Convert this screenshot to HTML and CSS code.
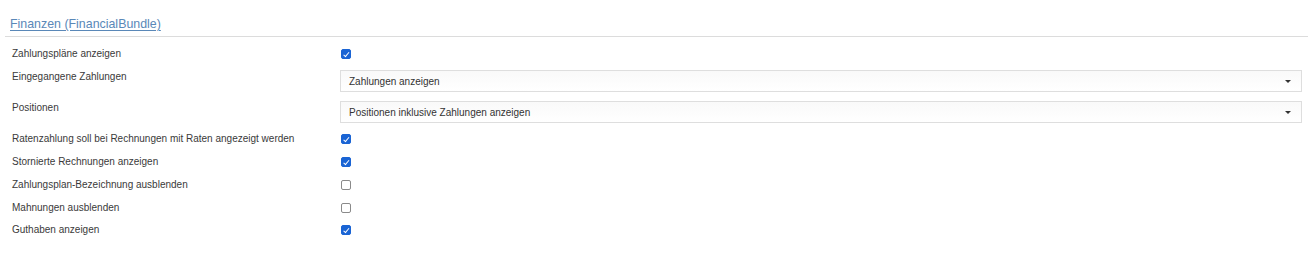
FILE: index.html
```html
<!DOCTYPE html>
<html lang="de">
<head>
<meta charset="utf-8">
<title>Finanzen</title>
<link rel="stylesheet" href="styles.css">
</head>
<body>
<div class="panel">
  <div class="panel-head">
    <a class="panel-title" href="#">Finanzen (FinancialBundle)</a>
  </div>
  <div class="form">
    <div class="row row-first">
      <div class="label">Zahlungspläne anzeigen</div>
      <div class="control"><span class="cb checked"></span></div>
    </div>
    <div class="row row-select">
      <div class="label">Eingegangene Zahlungen</div>
      <div class="control"><div class="select"><span class="select-text">Zahlungen anzeigen</span><span class="caret"></span></div></div>
    </div>
    <div class="row row-select row-select-last">
      <div class="label">Positionen</div>
      <div class="control"><div class="select"><span class="select-text">Positionen inklusive Zahlungen anzeigen</span><span class="caret"></span></div></div>
    </div>
    <div class="row">
      <div class="label">Ratenzahlung soll bei Rechnungen mit Raten angezeigt werden</div>
      <div class="control"><span class="cb checked"></span></div>
    </div>
    <div class="row">
      <div class="label">Stornierte Rechnungen anzeigen</div>
      <div class="control"><span class="cb checked"></span></div>
    </div>
    <div class="row">
      <div class="label">Zahlungsplan-Bezeichnung ausblenden</div>
      <div class="control"><span class="cb"></span></div>
    </div>
    <div class="row">
      <div class="label">Mahnungen ausblenden</div>
      <div class="control"><span class="cb"></span></div>
    </div>
    <div class="row">
      <div class="label">Guthaben anzeigen</div>
      <div class="control"><span class="cb checked"></span></div>
    </div>
  </div>
</div>
</body>
</html>
```

FILE: styles.css
```css
html, body {
  margin: 0;
  padding: 0;
  background: #ffffff;
}
body {
  font-family: "Liberation Sans", Arial, sans-serif;
  color: #3a3a3a;
}
.panel {
  padding: 0 2px 0 5px;
}
.panel-head {
  border-bottom: 1px solid #dcdcdc;
  padding: 14px 0 5px 5px;
  height: 17px;
}
.panel-title {
  font-size: 12.4px;
  line-height: 17px;
  color: #5a88b8;
  text-decoration: underline;
  text-underline-offset: 2px;
}
.form {
  padding: 6px 6px 0 7px;
}
.row {
  display: flex;
  align-items: center;
  height: 22.75px;
}
.row-first {
  height: 22px;
}
.row-select {
  align-items: flex-start;
  height: 31px;
  padding-top: 5px;
  box-sizing: border-box;
}
.row-select-last {
  height: 32px;
}
.label {
  width: 328px;
  flex: none;
  font-size: 10px;
  line-height: 14px;
}
.control {
  flex: 1;
  display: flex;
  align-items: center;
}
.cb {
  width: 10px;
  height: 10px;
  box-sizing: border-box;
  border: 1px solid #8a8a8a;
  border-radius: 2px;
  background: #fff;
  margin-left: 1px;
  position: relative;
}
.cb.checked {
  background: #1a64d4;
  border-color: #1a64d4;
}
.cb.checked::after {
  content: "";
  position: absolute;
  left: 2.5px;
  top: 0.5px;
  width: 2px;
  height: 4.5px;
  border: solid #fff;
  border-width: 0 1.3px 1.3px 0;
  transform: rotate(40deg);
}
.select {
  flex: 1;
  height: 22px;
  box-sizing: border-box;
  border: 1px solid #dedede;
  background: linear-gradient(#f9f9f9, #ffffff);
  display: flex;
  align-items: center;
  justify-content: space-between;
  padding: 0 10px 0 8px;
}
.select-text {
  font-size: 10px;
  color: #333;
}
.caret {
  width: 0;
  height: 0;
  border-left: 3px solid transparent;
  border-right: 3px solid transparent;
  border-top: 3px solid #333;
  margin-top: 1px;
}
```
